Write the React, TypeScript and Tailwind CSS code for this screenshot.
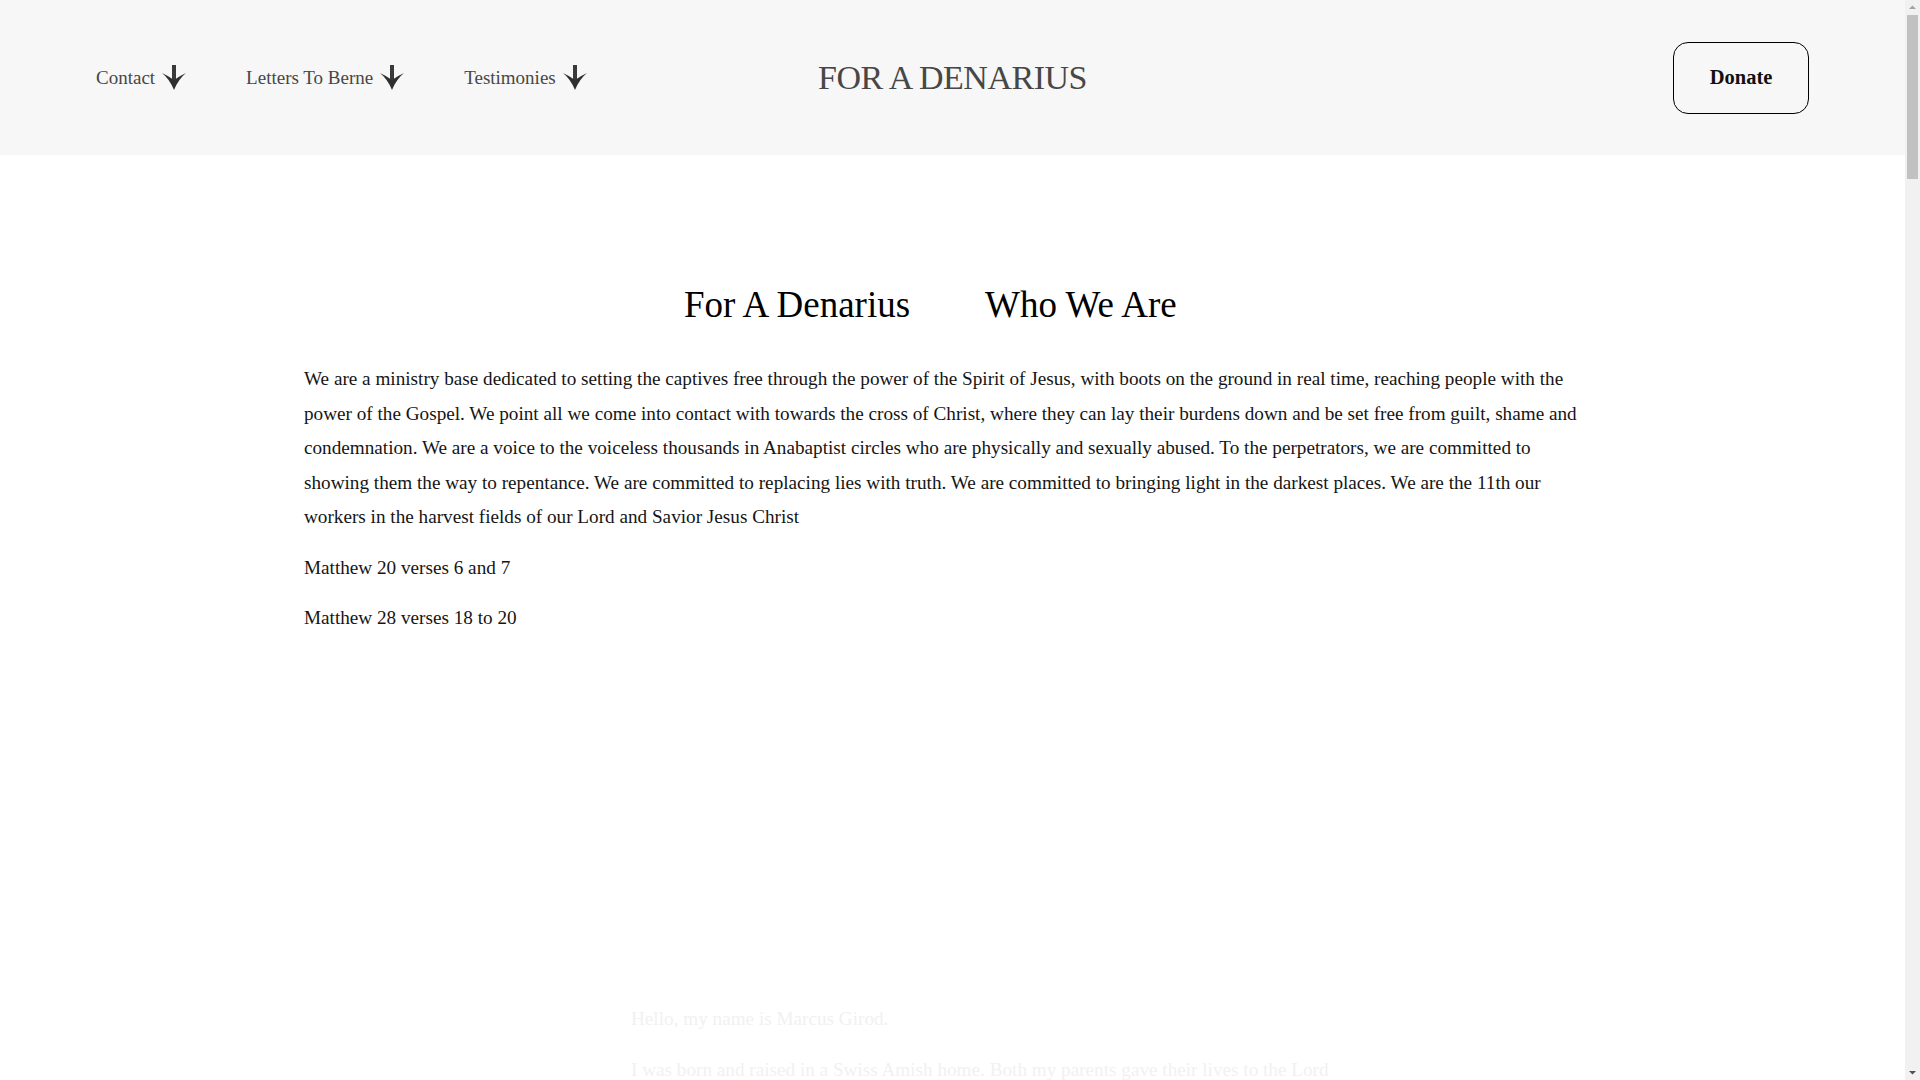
import React from 'react';

const serif = { fontFamily: '"Liberation Serif", "Times New Roman", serif' };

const DownArrow: React.FC = () => (
  <svg width="24" height="25" viewBox="0 0 24 25" className="ml-[7px] shrink-0">
    <rect x="10" y="0" width="4" height="15" fill="#3a3a3a" />
    <path d="M0 8 Q6.5 11 12 15 Q17.5 11 24 8 Q16.5 14 12 25 Q7.5 14 0 8 Z" fill="#2f2f2f" />
  </svg>
);

const NavItem: React.FC<{ label: string }> = ({ label }) => (
  <div className="flex items-center cursor-pointer">
    <span className="text-[19px] text-[#474747] leading-none">{label}</span>
    <DownArrow />
  </div>
);

// classic browser scrollbar as it appears in the shot
const ScrollBar: React.FC = () => (
  <div className="w-[15px] shrink-0 bg-[#f1f1f1] flex flex-col items-center">
    <svg width="15" height="15" viewBox="0 0 15 15">
      <path d="M4 9 L7.5 5.5 L11 9 Z" fill="#a3a3a3" />
    </svg>
    <div className="w-[11px] h-[164px] bg-[#c1c1c1]" />
    <div className="flex-1" />
    <svg width="15" height="15" viewBox="0 0 15 15">
      <path d="M4 6 L7.5 9.5 L11 6 Z" fill="#505050" />
    </svg>
  </div>
);

export default function App() {
  return (
    <div className="h-screen flex bg-white" style={serif}>
      <div className="flex-1 overflow-y-auto [scrollbar-width:none]">
        <div className="min-h-[6915px]">
          <header className="h-[155px] bg-[#f7f7f7] px-[96px] grid grid-cols-[1fr_auto_1fr] items-center">
            <nav className="flex items-center gap-[60px]">
              <NavItem label="Contact" />
              <NavItem label="Letters To Berne" />
              <NavItem label="Testimonies" />
            </nav>
            <div className="text-[34px] text-[#474747] leading-none tracking-[-0.5px]">FOR A DENARIUS</div>
            <div className="flex justify-end">
              <button className="w-[136px] h-[72px] border border-black rounded-[15px] text-[20.5px] font-bold text-[#111] flex items-center justify-center">
                Donate
              </button>
            </div>
          </header>

          <main className="w-[1290px] ml-[304px] pt-[128px]">
            <div className="flex gap-[75px] pl-[380px] text-[37px] leading-[43px] text-black">
              <h2>For A Denarius</h2>
              <h2>Who We Are</h2>
            </div>

            <div className="mt-[36px] text-[19.2px] leading-[34.56px] text-[#151515]">
              <p className="mb-4">
                We are a ministry base dedicated to setting the captives free through the power of the Spirit of Jesus, with boots on the ground in real time, reaching people with the power of the Gospel. We point all we come into contact with towards the cross of Christ, where they can lay their burdens down and be set free from guilt, shame and condemnation. We are a voice to the voiceless thousands in Anabaptist circles who are physically and sexually abused. To the perpetrators, we are committed to showing them the way to repentance. We are committed to replacing lies with truth. We are committed to bringing light in the darkest places. We are the 11th our workers in the harvest fields of our Lord and Savior Jesus Christ
              </p>
              <p className="mb-4">Matthew 20 verses 6 and 7</p>
              <p>Matthew 28 verses 18 to 20</p>
            </div>

            <div className="mt-[366px] ml-[327px] w-[760px] text-[19.2px] leading-[34.56px] text-[#f1f1f1]">
              <p className="mb-4">Hello, my name is Marcus Girod.</p>
              <p className="mb-4">
                I was born and raised in a Swiss Amish home. Both my parents gave their lives to the Lord
              </p>
            </div>
          </main>
        </div>
      </div>
      <ScrollBar />
    </div>
  );
}
